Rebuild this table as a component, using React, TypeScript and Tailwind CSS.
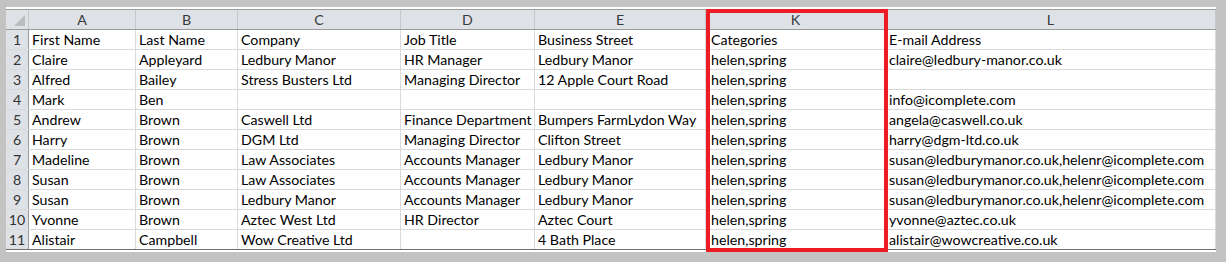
import React from 'react';

const cols = ['A', 'B', 'C', 'D', 'E', 'K', 'L'];

const rows: string[][] = [
  ['First Name', 'Last Name', 'Company', 'Job Title', 'Business Street', 'Categories', 'E-mail Address'],
  ['Claire', 'Appleyard', 'Ledbury Manor', 'HR Manager', 'Ledbury Manor', 'helen,spring', 'claire@ledbury-manor.co.uk'],
  ['Alfred', 'Bailey', 'Stress Busters Ltd', 'Managing Director', '12 Apple Court Road', 'helen,spring', ''],
  ['Mark', 'Ben', '', '', '', 'helen,spring', 'info@icomplete.com'],
  ['Andrew', 'Brown', 'Caswell Ltd', 'Finance Department', 'Bumpers FarmLydon Way', 'helen,spring', 'angela@caswell.co.uk'],
  ['Harry', 'Brown', 'DGM Ltd', 'Managing Director', 'Clifton Street', 'helen,spring', 'harry@dgm-ltd.co.uk'],
  ['Madeline', 'Brown', 'Law Associates', 'Accounts Manager', 'Ledbury Manor', 'helen,spring', 'susan@ledburymanor.co.uk,helenr@icomplete.com'],
  ['Susan', 'Brown', 'Law Associates', 'Accounts Manager', 'Ledbury Manor', 'helen,spring', 'susan@ledburymanor.co.uk,helenr@icomplete.com'],
  ['Susan', 'Brown', 'Ledbury Manor', 'Accounts Manager', 'Ledbury Manor', 'helen,spring', 'susan@ledburymanor.co.uk,helenr@icomplete.com'],
  ['Yvonne', 'Brown', 'Aztec West Ltd', 'HR Director', 'Aztec Court', 'helen,spring', 'yvonne@aztec.co.uk'],
  ['Alistair', 'Campbell', 'Wow Creative Ltd', '', '4 Bath Place', 'helen,spring', 'alistair@wowcreative.co.uk'],
];

const grid = 'grid grid-cols-[23px_107px_102px_163px_134px_171px_180px_330px]';

export default function App() {
  return (
    <div className="w-[1226px] h-[262px] bg-[#c3c3c3] pt-[7px] pl-[6px] font-['Lato',sans-serif] text-[14.2px] text-black">
      <div className="relative w-[1210px] bg-white pt-[2px]">
        <div className={`${grid} h-[21px] border-t border-[#9b9b9b] border-b border-b-[#9a9a9a] bg-[#dee2e7]`}>
          <div className="relative border-r border-[#c6c6c6]">
            <div className="absolute right-[3px] bottom-[3px] w-0 h-0 border-l-[11px] border-l-transparent border-b-[11px] border-b-[#bcbcbc]" />
          </div>
          {cols.map((c) => (
            <div key={c} className="flex items-center justify-center pt-[1px] border-r border-[#c6c6c6] text-[#3a3a3a] leading-none">
              {c}
            </div>
          ))}
        </div>
        {rows.map((r, i) => (
          <div key={i} className={`${grid} h-[20px] border-b ${i === rows.length - 1 ? 'border-[#6e6e6e]' : 'border-[#dadada]'}`}>
            <div className="flex items-center justify-center pt-[2px] bg-[#dee2e7] border-r border-[#9a9a9a] text-[#333] leading-none">
              {i + 1}
            </div>
            {r.map((v, j) => (
              <div
                key={j}
                className={`flex items-center pt-[2px] ${j === 5 ? 'pl-[5px]' : 'pl-[3px]'} border-r border-[#dadada] whitespace-nowrap overflow-visible leading-none`}
              >
                {v}
              </div>
            ))}
          </div>
        ))}
        <div className="h-[2px]" />
        <div className="absolute left-[700px] top-[2px] w-[182px] h-[243px] border-[4px] border-[#ed1c24]" />
      </div>
    </div>
  );
}
